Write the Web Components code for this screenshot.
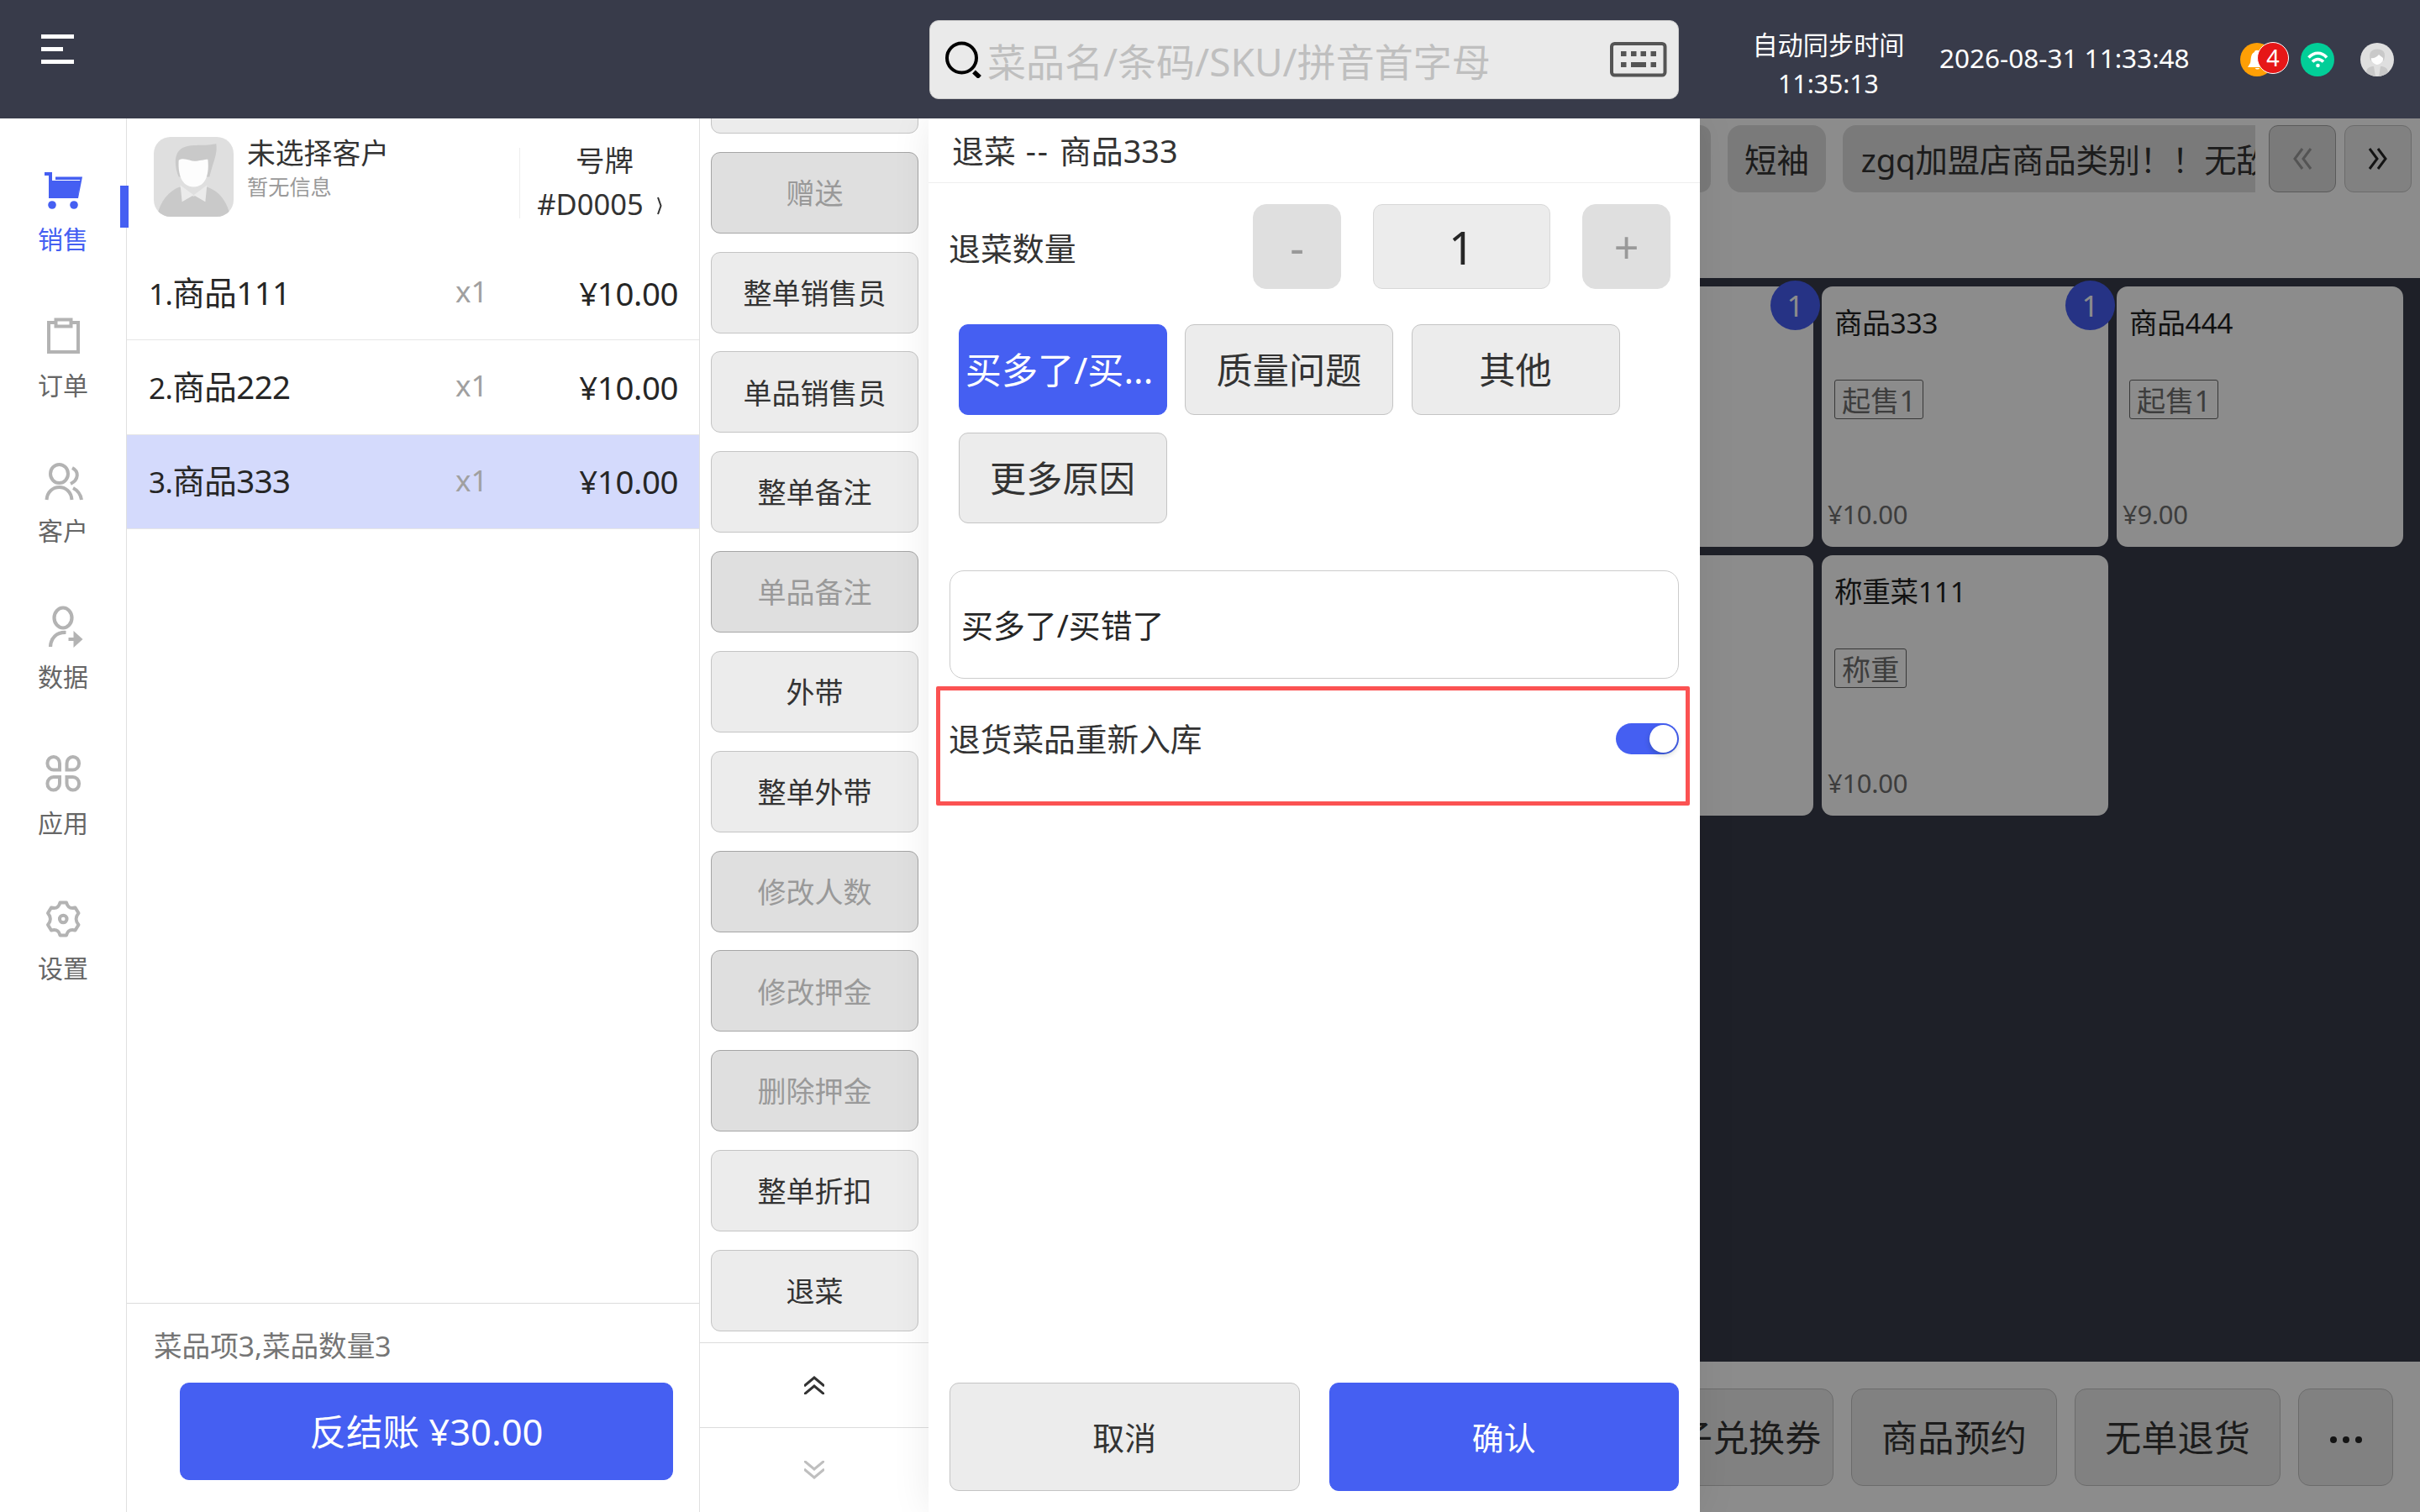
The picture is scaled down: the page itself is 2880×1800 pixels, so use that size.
<!DOCTYPE html>
<html lang="zh-CN">
<head>
<meta charset="utf-8">
<title>POS</title>
<style>
  body {
    margin: 0;
    font-family: "Noto Sans", "Noto Sans CJK SC", sans-serif;
    color: #333;
  }
</style>
</head>
<body>
<pos-app></pos-app>

<script>
const AVATAR = `
  <svg viewBox="0 0 96 96" width="100%" height="100%">
    <rect width="96" height="96" fill="#dfdfdf"/>
    <path d="M4 96C7 78 18 65 31 60L48 72L64 60C78 65 89 78 92 96Z" fill="#c9c9c9"/>
    <path d="M32 58L48 70L64 58L62 78L48 70L34 78Z" fill="#ebebeb"/>
    <path d="M30 48C25 36 24 22 32 15C42 7 60 12 75 8C77 20 72 28 67 48Z" fill="#c9c9c9"/>
    <path d="M30 28C36 24 44 29 49 29S61 27 65 27C67 44 63 60 48 60S29 44 30 28Z" fill="#fdfdfd"/>
  </svg>`;

const ICONS = {
  cart: `<g fill="currentColor"><path d="M0 1H9V28H40L41 15H9V11H42L42.500 10H13V6.500H45L40 32H5V5H0Z"/><path d="M5 15H42L39.500 32H5Z"/><circle cx="9" cy="40" r="4.800"/><circle cx="35" cy="40" r="4.800"/></g>`,
  order: `<g fill="none" stroke="currentColor" stroke-width="4"><path d="M13 6H5V41H40V6H32"/><path d="M13.500 2.500H31.500V10.500H13.500Z"/></g>`,
  customer: `<g fill="none" stroke="currentColor" stroke-width="4" transform="translate(0 -1)"><ellipse cx="17.500" cy="14" rx="10.500" ry="11"/><path d="M2.500 45C4 25 31 25 32.500 45M33 7C41 11 41 21 31 26M34 31C40 34 43 39 44 45"/></g>`,
  data: `<g transform="translate(-.500 -1)"><g fill="none" stroke="currentColor" stroke-width="4.200"><ellipse cx="22.500" cy="11.500" rx="10.500" ry="12"/><path d="M7.500 46C8 35 15 28.500 26 29M29 37H38"/></g><path d="M35 27L46 37L35 47Z" fill="currentColor"/></g>`,
  apps: `<g fill="none" stroke="currentColor" stroke-width="4" transform="translate(-.500 -1)"><path d="M18.500 18.500H11.500A7.300 7.800 0 1 1 18.500 11ZM27 18.500H34A7.300 7.800 0 1 0 27 11ZM18.500 27H11.500A7.300 7.800 0 1 0 18.500 34.500ZM27 27H34A7.300 7.800 0 1 1 27 34.500Z"/></g>`,
  settings: `<g fill="none" stroke="currentColor" stroke-width="4" stroke-linejoin="round" transform="translate(-.500 -1)"><path d="M19 3.500H26.500C28 9 31 11 37 9.500L41 16C37 21 37 25 41 30L37 36.500C31 35 28 37 26.500 42.500H19C17.500 37 14.500 35 8.500 36.500L4.500 30C8.500 25 8.500 21 4.500 16L8.500 9.500C14.500 11 17.500 9 19 3.500Z"/><circle cx="22.750" cy="23" r="4.300"/></g>`,
};

function define(name, template) {
  customElements.define(name, class extends HTMLElement {
    constructor() {
      super();
      this.attachShadow({ mode: "open" });
    }
    connectedCallback() {
      this.shadowRoot.innerHTML = typeof template === "function" ? template(this) : template;
    }
  });
}

define("pos-button", `
  <style>
    :host {
      display: flex;
      align-items: center;
      justify-content: center;
      box-sizing: border-box;
      flex: none;
      padding-top: 2px;
      border: 1.500px solid #c4c4c4;
      border-radius: 11px;
      background: #ececec;
      color: #333;
      white-space: nowrap;
      line-height: 1.200;
    }
    :host([disabled]) { background: #dfdfdf; border-color: #a5a5a5; color: #999; }
    :host([primary]) { background: #455ff2; border-color: #455ff2; color: #fff; }
    :host([flat]) { background: #dfdfdf; border-color: #dfdfdf; border-radius: 16px; }
  </style>
  <slot></slot>
`);

define("pos-header", `
  <style>
    :host { display: flex; height: 141px; background: #383b4a; color: #fff; box-sizing: border-box; }
    .menu { width: 1106px; padding: 41px 0 0 49px; box-sizing: border-box; }
    .menu svg { display: block; }
    .search {
      display: flex; align-items: center; box-sizing: border-box;
      width: 892px; height: 94px; margin-top: 24px; padding: 0 13px 0 18px;
      background: #eaeaea; border: 1px solid #ccc; border-radius: 11px;
      color: #bfbfbf; font-size: 46px; line-height: 60px; flex: none;
    }
    .search span { flex: 1; margin-left: 6px; padding-top: 4px; white-space: nowrap; }
    .sync { width: 200px; margin: 31px 0 0 78px; text-align: center; font-size: 30.200px; line-height: 45.500px; white-space: nowrap; }
    .date { width: 300px; margin: 46px 0 0 32px; font-size: 31.500px; line-height: 45px; white-space: nowrap; }
    .status { display: flex; margin: 51px 0 0 58px; height: 40px; }
    .dot { position: relative; width: 40px; height: 40px; border-radius: 50%; }
    .bell { background: #ff9f05; }
    .wifi { background: #02ce98; margin-left: 32px; }
    .me { overflow: hidden; margin-left: 31px; }
    .count {
      position: absolute; left: 20px; top: -1px; width: 36px; height: 36px;
      border: 1px solid #fff; border-radius: 50%; background: #e61717;
      font-size: 27px; line-height: 36px; text-align: center;
    }
    .dot svg { display: block; }
  </style>
  <div class="menu">
    <svg width="40" height="36"><path d="M0 2.500H39M0 17.500H26M0 32.500H39" stroke="#fff" stroke-width="5"/></svg>
  </div>
  <div class="search">
    <svg width="44" height="44" fill="none" stroke="#000"><circle cx="19.500" cy="20" r="17.500" stroke-width="4"/><path d="M34 36.500L41 43" stroke-width="5.500"/></svg>
    <span>菜品名/条码/SKU/拼音首字母</span>
    <svg width="68" height="42"><rect x="2" y="2" width="63.500" height="37.500" rx="3.500" fill="none" stroke="#555" stroke-width="4"/><path d="M13 14H19.500M25 14H31.500M36.500 14H43M48.500 14H55M13 27H19.500M25 27H43M48.500 27H55" stroke="#555" stroke-width="6"/></svg>
  </div>
  <div class="sync">自动同步时间<br>11:35:13</div>
  <div class="date">2026-08-31 11:33:48</div>
  <div class="status">
    <div class="dot bell">
      <svg width="40" height="40" fill="#fff"><path d="M17 11C17 8 23 8 23 11C28 13 27 20 28 24L31 29H9L12 24C13 20 12 13 17 11ZM18 30H23C23 32 18 32 18 30Z"/></svg>
      <div class="count">4</div>
    </div>
    <div class="dot wifi">
      <svg width="40" height="40" fill="none" stroke="#fff" stroke-width="3.600"><path d="M9.500 17.500C16 10.500 25 10.500 31 17.500M14 22.500C18 18.500 23 18.500 27 22.500"/><circle cx="20.500" cy="27" r="2.300" fill="#fff" stroke="none"/></svg>
    </div>
    <div class="dot me">
      <svg width="40" height="40"><rect width="40" height="40" fill="#dfdfdf"/><path d="M7 36C7 30 11 28 16 28L18 40H9ZM33 36C33 30 29 28 24 28L22 40H31Z" fill="#c9c9c9"/><path d="M12 21C9 11 14 7.500 20 7.500C27 7.500 31 11 28 21Z" fill="#c9c9c9"/><path d="M13 18C17 19 20 16 22 14L27 18C28 22 23 26 20 26S12 22 13 18Z" fill="#fdfdfd"/></svg>
    </div>
  </div>
`);

define("nav-item", el => `
  <style>
    :host {
      position: relative; display: flex; flex-direction: column; align-items: center;
      box-sizing: border-box; width: 150px; height: 173.700px; padding-top: 45px;
      color: #b3b3b3; font-size: 30px;
    }
    span { margin-top: 13px; line-height: 44px; color: #666; }
    :host([active]), :host([active]) span { color: #455ff2; }
    :host([active])::after {
      content: ""; position: absolute; right: -3px; top: 62px;
      width: 10px; height: 50px; background: #455ff2;
    }
    svg { display: block; overflow: visible; }
  </style>
  <svg width="45" height="46">${ICONS[el.getAttribute("icon")]}</svg>
  <span><slot></slot></span>
`);

define("side-nav", `
  <style>
    :host { display: block; width: 150px; padding-top: 18px; border-right: 1px solid #e0e0e0; flex: none; }
  </style>
  <nav-item icon="cart" active>销售</nav-item>
  <nav-item icon="order">订单</nav-item>
  <nav-item icon="customer">客户</nav-item>
  <nav-item icon="data">数据</nav-item>
  <nav-item icon="apps">应用</nav-item>
  <nav-item icon="settings">设置</nav-item>
`);

define("order-line", el => `
  <style>
    :host {
      display: flex; align-items: center; box-sizing: border-box; height: 112.300px;
      padding: 0 25px 0 26px; border-bottom: 1px solid #e6e6e6;
      font-size: 38.400px; line-height: 56px; color: #262626; white-space: nowrap;
    }
    :host([selected]) { background: #d4dafc; }
    .name { flex: 1; letter-spacing: -.500px; }
    .no { font-size: 35px; }
    .qty { width: 146px; font-size: 35px; line-height: 50px; margin-top: -3px; color: #a0a0a0; }
    .price { width: 119px; text-align: right; letter-spacing: -0.400px; }
  </style>
  <div class="name"><span class="no">${el.getAttribute("no")}.</span><slot></slot></div>
  <div class="qty">x1</div>
  <div class="price">¥10.00</div>
`);

define("ticket-panel", `
  <style>
    :host { display: flex; flex-direction: column; width: 681px; border-right: 1px solid #e0e0e0; flex: none; }
    .customer { display: flex; height: 152px; box-sizing: border-box; padding: 22px 0 0 32px; }
    .avatar { width: 95px; height: 95px; border-radius: 20px; overflow: hidden; }
    .who { width: 324px; margin: -2px 0 0 16px; }
    .name { font-size: 33.800px; line-height: 42px; }
    .info { font-size: 25.200px; line-height: 38px; color: #999; }
    .plate {
      width: 201px; height: 84px; margin-top: 13px; border-left: 1px solid #eee;
      text-align: center; font-size: 34.500px; line-height: 52px; white-space: nowrap;
    }
    .plate div:first-child { margin-top: -11px; }
    .plate svg { margin: 0 12px 0 16px; vertical-align: 0; }
    .lines { flex: 1; }
    .foot { height: 249px; border-top: 1px solid #dcdcdc; box-sizing: border-box; padding: 28px 31px 0 32px; }
    .sum { font-size: 33.600px; line-height: 44px; color: #757575; }
    pos-button { height: 116px; margin: 22px 0 0 31px; padding-top: 0; font-size: 43.500px; }
  </style>
  <div class="customer">
    <div class="avatar">${AVATAR}</div>
    <div class="who">
      <div class="name">未选择客户</div>
      <div class="info">暂无信息</div>
    </div>
    <div class="plate">
      <div>号牌</div>
      <div>#D0005<svg width="6" height="22" fill="none" stroke="#333" stroke-width="2"><path d="M1 1L4.500 11L1 21"/></svg></div>
    </div>
  </div>
  <div class="lines">
    <order-line no="1">商品111</order-line>
    <order-line no="2">商品222</order-line>
    <order-line no="3" selected>商品333</order-line>
  </div>
  <div class="foot">
    <div class="sum">菜品项3,菜品数量3</div>
    <pos-button primary>反结账 ¥30.00</pos-button>
  </div>
`);

define("action-column", `
  <style>
    :host { display: flex; flex-direction: column; width: 272px; flex: none; }
    .list {
      display: flex; flex-direction: column; justify-content: flex-end; gap: 21.850px;
      flex: 1; min-height: 0; overflow: hidden; padding: 0 12px 13px 13px; font-size: 34px;
    }
    pos-button { height: 97px; }
    .page {
      display: flex; align-items: center; justify-content: center; box-sizing: border-box;
      height: 101px; border-top: 1px solid #dcdcdc;
    }
    .page svg { fill: none; stroke: #333; stroke-width: 3; }
    .page.off svg { stroke: #bfbfbf; }
  </style>
  <div class="list">
    <pos-button></pos-button>
    <pos-button disabled>赠送</pos-button>
    <pos-button>整单销售员</pos-button>
    <pos-button>单品销售员</pos-button>
    <pos-button>整单备注</pos-button>
    <pos-button disabled>单品备注</pos-button>
    <pos-button>外带</pos-button>
    <pos-button>整单外带</pos-button>
    <pos-button disabled>修改人数</pos-button>
    <pos-button disabled>修改押金</pos-button>
    <pos-button disabled>删除押金</pos-button>
    <pos-button>整单折扣</pos-button>
    <pos-button>退菜</pos-button>
  </div>
  <div class="page"><svg width="24" height="22"><path d="M0 12L12 2L24 12M0 22L12 12L24 22"/></svg></div>
  <div class="page off"><svg width="24" height="22"><path d="M0 0L12 10L24 0M0 10L12 20L24 10"/></svg></div>
`);

define("refund-drawer", `
  <style>
    :host {
      position: relative; z-index: 2; display: flex; flex-direction: column; box-sizing: border-box;
      width: 918px; flex: none; background: #fff; box-shadow: 0 0 44px rgba(0, 0, 0, .08);
      clip-path: inset(0 -80px 0 -80px); font-size: 37.900px;
    }
    .title { height: 77px; padding-left: 28px; border-bottom: 1px solid #eee; line-height: 77px; box-sizing: border-box; color: #333; word-spacing: 2px; }
    .title span { letter-spacing: 2px; }
    .body { flex: 1; padding: 25px 25px 0; }
    .qty { display: flex; align-items: center; padding-right: 10px; gap: 38px; font-size: 54px; }
    .qty label { flex: 1; margin-left: -1px; font-size: 37.900px; }
    .qty pos-button { width: 105px; height: 101px; color: #999; font-size: 52px; }
    .qty .num { width: 211px; color: #262626; border-color: #d8d8d8; font-size: 54px; }
    .reasons { display: flex; flex-wrap: wrap; gap: 21.500px; margin: 42px 0 0 10.500px; font-size: 43.200px; }
    .reasons pos-button { width: 248px; height: 107.500px; }
    .reasons pos-button[primary] { padding-right: 8px; }
    .note {
      height: 129px; margin-top: 56px; padding-left: 13px; box-sizing: border-box; line-height: 129px;
      border: 1px solid #ccc; border-radius: 17px; color: #262626;
    }
    .stock {
      display: flex; justify-content: space-between; box-sizing: border-box; height: 142px;
      margin: 9px -13px 0 -16px; padding: 38px 8px 0 10px; border: 5px solid #fb5252; border-radius: 2px;
      line-height: 50px; font-size: 37.700px;
    }
    .stock span { margin-top: -5px; }
    .switch { box-sizing: border-box; width: 75px; height: 37px; margin-top: 1px; padding: 2px; border-radius: 19px; background: #455ff2; }
    .knob { width: 33px; height: 33px; margin-left: auto; border-radius: 50%; background: #fff; box-shadow: 0 3px 6px rgba(0, 35, 11, .2); }
    .foot { display: flex; gap: 35px; padding: 0 25px; height: 154px; }
    .foot pos-button { flex: 1; height: 129px; }
  </style>
  <div class="title">退菜 <span>--</span> 商品333</div>
  <div class="body">
    <div class="qty">
      <label>退菜数量</label>
      <pos-button flat>-</pos-button>
      <pos-button class="num">1</pos-button>
      <pos-button flat>+</pos-button>
    </div>
    <div class="reasons">
      <pos-button primary>买多了/买...</pos-button>
      <pos-button>质量问题</pos-button>
      <pos-button>其他</pos-button>
      <pos-button>更多原因</pos-button>
    </div>
    <div class="note">买多了/买错了</div>
    <div class="stock">
      <span>退货菜品重新入库</span>
      <div class="switch"><div class="knob"></div></div>
    </div>
  </div>
  <div class="foot">
    <pos-button>取消</pos-button>
    <pos-button primary>确认</pos-button>
  </div>
`);

define("product-card", el => `
  <style>
    :host {
      position: relative; display: flex; flex-direction: column; align-items: flex-start;
      box-sizing: border-box; height: 310px; padding: 20px 15px 0; border-radius: 13px; background: #fff;
    }
    .name { font-size: 33.600px; line-height: 46px; letter-spacing: -.300px; color: #1f1f1f; }
    .tag {
      box-sizing: border-box; height: 47px; margin-top: 45px; padding: 0 8px; border: 1px solid #666; border-radius: 3px;
      font-size: 34.200px; line-height: 47px; color: #707070;
    }
    .price { margin: 91px 0 0 -8px; font-size: 31px; line-height: 44px; letter-spacing: -0.300px; color: #707070; }
    .badge {
      position: absolute; z-index: 1; right: -8px; top: -7px; width: 59px; height: 59px; border-radius: 50%;
      background: #455df2; color: #fff; font-size: 35px; line-height: 60px; text-align: center;
    }
  </style>
  ${el.hasAttribute("tag") ? `
    <div class="name"><slot></slot></div>
    <div class="tag">${el.getAttribute("tag")}</div>
    <div class="price">${el.getAttribute("price")}</div>` : ""}
  ${el.hasAttribute("count") ? `<div class="badge">${el.getAttribute("count")}</div>` : ""}
`);

define("product-area", `
  <style>
    :host { position: relative; display: flex; flex-direction: column; flex: 1; min-width: 0; overflow: hidden; background: #fff; }
    .cats { display: flex; height: 190px; box-sizing: border-box; padding: 8px 10px 0 0; font-size: 38.400px; justify-content: flex-end; }
    .scroll { display: flex; gap: 20px; width: 661px; overflow: hidden; flex: none; }
    .scroll pos-button { height: 80px; padding: 2px 20px 0; border: 0; }
    .scroll .cut { width: 13px; padding: 0; border-radius: 0 16px 16px 0; }
    .scroll .long { padding-left: 22px; letter-spacing: -.200px; }
    .pager { width: 80px; height: 80px; margin-left: 10px; padding: 0; }
    .pager:first-of-type { margin-left: 16px; }
    .pager svg { fill: none; stroke: #262626; stroke-width: 3; }
    .pager[disabled] svg { stroke: #999; }
    .grid {
      display: grid; grid-template-columns: repeat(3, 341px); gap: 10px; justify-content: end; align-content: start;
      flex: 1; padding: 10px 20px 0 0; background: #373b49;
    }
    .foot { display: flex; justify-content: flex-end; gap: 21px; height: 179px; box-sizing: border-box; padding: 32px 32px 0 0; font-size: 43.200px; }
    .foot pos-button { width: 245px; height: 116px; border-radius: 14px; }
    .foot .more { width: 113px; }
    .mask { position: absolute; z-index: 3; inset: 0; background: rgba(0, 0, 0, .45); }
  </style>
  <div class="cats">
    <div class="scroll">
      <pos-button flat class="cut"></pos-button>
      <pos-button flat>短袖</pos-button>
      <pos-button flat class="long">zgq加盟店商品类别！！无敌</pos-button>
    </div>
    <pos-button class="pager" disabled><svg width="24" height="26"><path d="M12 1L3 13L12 25M22 1L13 13L22 25"/></svg></pos-button>
    <pos-button class="pager"><svg width="24" height="26"><path d="M2 1L11 13L2 25M12 1L21 13L12 25"/></svg></pos-button>
  </div>
  <div class="grid">
    <product-card count="1"></product-card>
    <product-card count="1" tag="起售1" price="¥10.00">商品333</product-card>
    <product-card tag="起售1" price="¥9.00">商品444</product-card>
    <product-card></product-card>
    <product-card tag="称重" price="¥10.00">称重菜111</product-card>
  </div>
  <div class="foot">
    <pos-button>电子兑换券</pos-button>
    <pos-button>商品预约</pos-button>
    <pos-button>无单退货</pos-button>
    <pos-button class="more"><svg width="42" height="12" fill="#262626"><circle cx="6" cy="8" r="4"/><circle cx="21" cy="8" r="4"/><circle cx="36" cy="8" r="4"/></svg></pos-button>
  </div>
  <div class="mask"></div>
`);

define("pos-app", `
  <style>
    :host { display: flex; flex-direction: column; width: 2880px; height: 1800px; overflow: hidden; background: #fff; }
    main { display: flex; flex: 1; min-height: 0; }
  </style>
  <pos-header></pos-header>
  <main>
    <side-nav></side-nav>
    <ticket-panel></ticket-panel>
    <action-column></action-column>
    <refund-drawer></refund-drawer>
    <product-area></product-area>
  </main>
`);
</script>
</body>
</html>
